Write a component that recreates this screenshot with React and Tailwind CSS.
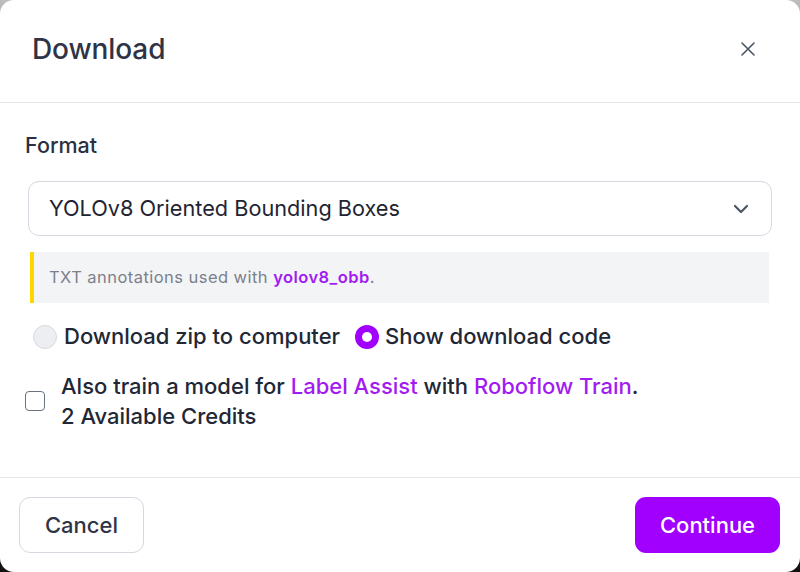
import React from "react";

export default function App() {
  return (
    <div className="w-[800px] h-[572px] bg-gradient-to-b from-[#bdbdbd] via-[#555] to-[#111]" style={{ fontFamily: "Inter, 'Noto Sans', sans-serif" }}>
      <div className="w-full h-full bg-white rounded-[14px] flex flex-col">
        <div className="h-[103px] flex items-center justify-between pl-[32px] pr-[44px] border-b border-[#e5e7eb] pb-[4px]">
          <h1 className="text-[28px] font-medium text-[#2e3446] tracking-[-0.1px]">Download</h1>
          <svg width="16" height="16" viewBox="0 0 16 16" className="text-[#4b5563]">
            <path d="M2 2 L14 14 M14 2 L2 14" stroke="currentColor" strokeWidth="1.6" strokeLinecap="round" />
          </svg>
        </div>
        <div className="flex-1 flex flex-col px-[28px] pt-[28px]">
          <div className="text-[21.5px] font-medium text-[#2b3040] ml-[-3px] leading-[28px]">Format</div>
          <div className="mt-[22px] h-[55px] border border-[#d6d8e0] rounded-[11px] flex items-center justify-between pl-[20px] pr-[22px]">
            <span className="text-[21.7px] text-[#1f2433]">YOLOv8 Oriented Bounding Boxes</span>
            <svg width="16" height="10" viewBox="0 0 16 10">
              <path d="M2 2 L8 8 L14 2" fill="none" stroke="#4b5563" strokeWidth="2.2" strokeLinecap="round" strokeLinejoin="round" />
            </svg>
          </div>
          <div className="mt-[16px] ml-[2px] mr-[3px] h-[51px] bg-[#f3f4f6] border-l-[4px] border-[#ffd600] flex items-center pl-[15px] text-[16.5px] tracking-[0.45px] text-[#7c808a]">
            <span>TXT annotations used with <span className="text-[#a21cf2] font-semibold">yolov8_obb</span>.</span>
          </div>
          <div className="mt-[17px] flex items-center ml-[5px]">
            <span className="w-[24px] h-[24px] rounded-full bg-[#eceef2] border border-[#d7d9de]"></span>
            <span className="ml-[7px] text-[22px] font-medium text-[#222736]">Download zip to computer</span>
            <span className="ml-[15px] w-[24px] h-[24px] rounded-full bg-[#a100ff] flex items-center justify-center">
              <span className="w-[10px] h-[10px] rounded-full bg-white"></span>
            </span>
            <span className="ml-[6px] text-[22px] font-medium text-[#222736]">Show download code</span>
          </div>
          <div className="mt-[18px] flex items-center ml-[-3px]">
            <span className="w-[20px] h-[20px] rounded-[4px] border-[1.5px] border-[#6b7280] bg-white"></span>
            <div className="ml-[16px] text-[22px] font-medium leading-[30px] text-[#222736]">
              <div>Also train a model for <span className="text-[#a21cf2]">Label Assist</span> with <span className="text-[#a21cf2]">Roboflow Train</span>.</div>
              <div>2 Available Credits</div>
            </div>
          </div>
        </div>
        <div className="h-[95px] border-t border-[#e5e7eb] flex items-start justify-between pt-[19px] pl-[19px] pr-[20px]">
          <button className="h-[56px] w-[125px] rounded-[11px] border border-[#d6d8e0] bg-white text-[22px] font-medium text-[#2e3446]">Cancel</button>
          <button className="h-[56px] w-[145px] rounded-[11px] bg-[#a100ff] text-[22px] font-medium text-white">Continue</button>
        </div>
      </div>
    </div>
  );
}
